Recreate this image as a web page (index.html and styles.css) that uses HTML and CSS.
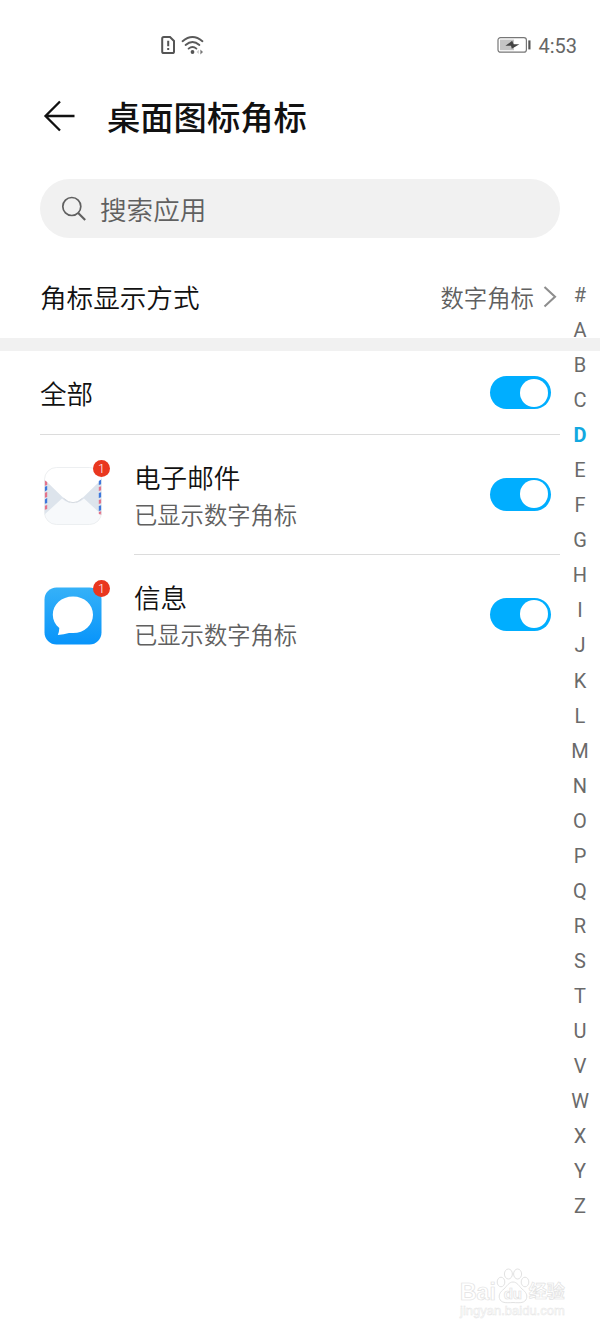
FILE: index.html
```
<!DOCTYPE html>
<html lang="zh-CN">
    <head>
        <meta charset="utf-8" />
        <meta name="viewport" content="width=device-width,initial-scale=1" />
        <title>桌面图标角标</title>
        <link rel="stylesheet" href="styles.css">
    </head>

    <body>
        <div id="app">
            <div class="status-bar">
                <div class="status-left">
                    <svg width="16" height="20" viewBox="0 0 16 20">
                        <path d="M2.2 3.6Q2.2 2 3.8 2H10L14 6V16.4Q14 18 12.4 18H3.8Q2.2 18 2.2 16.4Z" fill="none" stroke="#555" stroke-width="2" />
                        <path d="M8.2 5.8V11.2M8.2 13V15" stroke="#555" stroke-width="2" />
                    </svg>
                    <svg width="24" height="20" viewBox="0 0 24 20">
                        <g fill="none" stroke="#5a5a5a" stroke-width="1.9" stroke-linecap="round">
                            <path d="M1.6 6.2Q11.5 -2.2 21.4 6.2" />
                            <path d="M4.6 10Q11.5 4 18.4 10" />
                            <path d="M7.6 13.6Q11.5 10.2 15.4 13.6" />
                        </g>
                        <circle cx="11.5" cy="17" r="1.9" fill="#555" />
                        <path d="M17.8 14.8V19L15.6 16.9Z" fill="#ccc" />
                        <path d="M19.4 14.4V19.4L22 16.9Z" fill="#777" />
                    </svg>
                </div>
                <div class="status-right">
                    <svg width="34" height="18" viewBox="0 0 34 18">
                        <rect x="1" y="1.6" width="28.4" height="14.6" rx="2.5" fill="#fff" stroke="#777" stroke-width="1.2" />
                        <rect x="3" y="3.6" width="14" height="10.6" fill="#c4c4c4" />
                        <path d="M15.2 4.8L8.4 9.8H14L14.8 12.8L22.4 8.2H16.6Z" fill="#444" />
                        <path d="M32.4 4.4V13.4" stroke="#555" stroke-width="2.2" />
                    </svg>
                    <span class="time">4:53</span>
                </div>
            </div>

            <div class="header">
                <svg class="back" width="32" height="32" viewBox="0 0 32 32">
                    <path d="M31.5 16H2.5M17 1.5L2.5 16L17 30.5" fill="none" stroke="#111" stroke-width="2.3" />
                </svg>
                <h1 class="title">桌面图标角标</h1>
            </div>

            <div class="search">
                <svg width="26" height="26" viewBox="0 0 26 26">
                    <circle cx="10.8" cy="10.5" r="9" fill="none" stroke="#606060" stroke-width="1.7" />
                    <path d="M17.2 17L24.2 24" stroke="#606060" stroke-width="2.1" />
                </svg>
                <span>搜索应用</span>
            </div>

            <div class="row mode">
                <span class="name">角标显示方式</span>
                <span class="value">数字角标</span>
                <svg width="14" height="22" viewBox="0 0 14 22">
                    <path d="M1.5 1L12 10.8L1.5 20.5" fill="none" stroke="#8e8e8e" stroke-width="2.1" />
                </svg>
            </div>

            <div class="band"></div>

            <div class="row all">
                <span class="name">全部</span>
                <div class="switch"></div>
            </div>

            <div class="row app">
                <div class="icon">
                    <svg width="58" height="58" viewBox="0 0 58 58">
                        <defs>
                            <clipPath id="mail"><rect x="0.5" y="0.5" width="57" height="57" rx="12" /></clipPath>
                        </defs>
                        <rect x="0.5" y="0.5" width="57" height="57" rx="12" fill="#fff" />
                        <g clip-path="url(#mail)">
                            <path d="M0 12L29 38L58 12V48H0Z" fill="#dde4ec" />
                            <path d="M0 48L18 31.5Q29 41 40 31.5L58 48V58H0Z" fill="#f7f9fb" />
                            <path d="M0 0H58V12L38.5 31Q29 40 19.5 31L0 12Z" fill="#fff" />
                            <path d="M19.5 31.2Q29 40.2 38.5 31.2" fill="none" stroke="#d5dae0" stroke-width="1" />
                            <path d="M0 13L3.2 15V18L0 19ZM0 26L3.2 25V30L0 31ZM0 39L3.2 38V42L0 43Z" fill="#e3738a" />
                            <path d="M0 20L3.2 19V23L0 25ZM0 33L3.2 31V36L0 37ZM54.8 14L58 12V17L54.8 18ZM54.8 26L58 25V30L54.8 31ZM54.8 39L58 38V43L54.8 44Z" fill="#3d78dc" />
                            <path d="M54.8 20L58 19V23L54.8 24ZM54.8 33L58 32V36L54.8 37ZM54.8 45L58 44V48L54.8 47Z" fill="#e3738a" />
                        </g>
                        <rect x="0.5" y="0.5" width="57" height="57" rx="12" fill="none" stroke="#e9ebed" stroke-width="0.8" />
                    </svg>
                    <span class="badge">1</span>
                </div>
                <div class="info">
                    <div class="name">电子邮件</div>
                    <div class="desc">已显示数字角标</div>
                </div>
                <div class="switch"></div>
            </div>

            <div class="row app last">
                <div class="icon">
                    <svg width="58" height="58" viewBox="0 0 58 58">
                        <defs>
                            <linearGradient id="blue" x1="0" y1="0" x2="0" y2="1">
                                <stop offset="0" stop-color="#35b1f8" />
                                <stop offset="1" stop-color="#0894fa" />
                            </linearGradient>
                        </defs>
                        <rect x="0.5" y="0.5" width="57" height="57" rx="12" fill="url(#blue)" />
                        <path d="M29 9.5C40.5 9.5 49 17.5 49 27.7C49 38 40.5 46 29 46H25Q20 47.6 13.8 48Q15.2 45 15.3 41C11 37.5 8.8 33 8.8 27.7C8.8 17.5 17.5 9.5 29 9.5Z" fill="#fff" />
                    </svg>
                    <span class="badge">1</span>
                </div>
                <div class="info">
                    <div class="name">信息</div>
                    <div class="desc">已显示数字角标</div>
                </div>
                <div class="switch"></div>
            </div>

            <div class="letters">
                <span>#</span>
                <span>A</span>
                <span>B</span>
                <span>C</span>
                <span class="active">D</span>
                <span>E</span>
                <span>F</span>
                <span>G</span>
                <span>H</span>
                <span>I</span>
                <span>J</span>
                <span>K</span>
                <span>L</span>
                <span>M</span>
                <span>N</span>
                <span>O</span>
                <span>P</span>
                <span>Q</span>
                <span>R</span>
                <span>S</span>
                <span>T</span>
                <span>U</span>
                <span>V</span>
                <span>W</span>
                <span>X</span>
                <span>Y</span>
                <span>Z</span>
            </div>

            <div class="watermark">
                <div class="brand">
                    <span>Bai</span>
                    <div class="paw">
                        <svg width="34" height="36" viewBox="0 0 34 36">
                            <g fill="#fff" stroke="#e2e2e2" stroke-width="1">
                                <ellipse cx="5" cy="14" rx="3.8" ry="4.8" />
                                <ellipse cx="12.4" cy="6" rx="4" ry="5" />
                                <ellipse cx="21.6" cy="6" rx="4" ry="5" />
                                <ellipse cx="29" cy="14" rx="3.8" ry="4.8" />
                                <path d="M17 14C21 14 23 18 26 21C30 24 31.5 27 30.5 30.5C29 35 24.5 35 17 34.5C9.5 35 5 35 3.5 30.5C2.5 27 4 24 8 21C11 18 13 14 17 14Z" />
                            </g>
                        </svg>
                        <span class="du">du</span>
                    </div>
                    <span class="cn">经验</span>
                </div>
                <div class="site">jingyan.baidu.com</div>
            </div>
        </div>
    </body>
</html>
```
FILE: styles.css
```
* {
    box-sizing: border-box;
}
body {
    margin: 0;
    background: #fff;
    font-family: Roboto, "Noto Sans CJK SC", sans-serif;
    font-weight: 350;
    color: #111;
}
svg {
    display: block;
    flex: none;
}
#app {
    position: relative;
    width: 600px;
    height: 1333px;
    overflow: hidden;
}
.status-bar {
    height: 88px;
    padding: 2px 23px 0 160px;
    display: flex;
    align-items: center;
    justify-content: space-between;
}
.status-left {
    display: flex;
    align-items: center;
    gap: 5px;
}
.status-right {
    display: flex;
    align-items: center;
    gap: 7px;
}
.time {
    padding-top: 1px;
    font-size: 20px;
    line-height: 20px;
    font-weight: 400;
    color: #666;
}
.header {
    height: 91px;
    padding: 0 0 36px 43px;
    display: flex;
    align-items: center;
}
.title {
    margin: 7px 0 0 32px;
    font-size: 33.3px;
    line-height: 40px;
    font-weight: 500;
}
.search {
    height: 59px;
    margin: 0 40px;
    padding-left: 21px;
    border-radius: 30px;
    background: #f1f1f1;
    display: flex;
    align-items: center;
    gap: 13px;
    font-size: 26.6px;
    color: #606060;
}
.row {
    margin: 0 40px;
    display: flex;
    align-items: center;
}
.name {
    font-size: 26.6px;
    line-height: 36px;
}
.mode {
    height: 100px;
    padding: 17px 3px 0 0;
}
.mode .name,
.all .name {
    padding-top: 4px;
}
.mode .value {
    margin-left: auto;
    margin-right: 9px;
    font-size: 23.4px;
    color: #606060;
}
.band {
    height: 13px;
    background: #f1f1f1;
}
.all {
    height: 84px;
    border-bottom: 1px solid #dcdcdc;
}
.switch {
    width: 61px;
    height: 33px;
    margin-left: auto;
    margin-right: 9px;
    padding: 2.5px 3px;
    border-radius: 17px;
    background: #00aeff;
    display: flex;
    justify-content: flex-end;
}
.switch::after {
    content: "";
    width: 28px;
    height: 28px;
    border-radius: 50%;
    background: #fff;
}
.app {
    height: 120px;
    padding-left: 4px;
}
.icon {
    position: relative;
    margin-top: 2px;
}
.badge {
    position: absolute;
    top: -7px;
    right: -8px;
    width: 17px;
    height: 17px;
    border-radius: 50%;
    background: #e9371f;
    color: #fff;
    font-size: 12.5px;
    line-height: 17px;
    text-align: center;
}
.info {
    align-self: stretch;
    flex: 1;
    margin-left: 32px;
    padding-top: 26px;
    border-bottom: 1px solid #dcdcdc;
}
.info .desc {
    margin-top: 3px;
    font-size: 23.3px;
    line-height: 32px;
    color: #606060;
}
.app .switch {
    margin-left: 0;
    margin-bottom: 2px;
}
.app .info {
    margin-right: -70px;
    padding-right: 70px;
}
.last .info {
    border-bottom: none;
}
.letters {
    position: absolute;
    top: 277px;
    right: 0;
    width: 40px;
    padding-top: 1px;
    display: flex;
    flex-direction: column;
    font-size: 20px;
    line-height: 35.05px;
    font-weight: 400;
    text-align: center;
    color: #6a6a6a;
}
.letters .active {
    color: #12a8e0;
    font-weight: bold;
}
.watermark {
    position: absolute;
    left: 460px;
    top: 1268px;
    width: 110px;
    color: #fff;
    -webkit-text-stroke: 0.7px #e2e2e2;
}
.brand {
    height: 36px;
    display: flex;
    align-items: flex-end;
    font-family: "Liberation Sans", "Noto Sans CJK SC", sans-serif;
    font-size: 23px;
    line-height: 24px;
    font-weight: bold;
}
.paw {
    position: relative;
}
.du {
    position: absolute;
    left: 0;
    right: 0;
    bottom: 1px;
    font-size: 15px;
    line-height: 18px;
    text-align: center;
}
.cn {
    margin-left: -1px;
    font-size: 18px;
}
.site {
    font-family: "Liberation Sans", sans-serif;
    font-size: 13px;
    line-height: 14px;
    -webkit-text-stroke: 0.5px #e6e6e6;
}
```
